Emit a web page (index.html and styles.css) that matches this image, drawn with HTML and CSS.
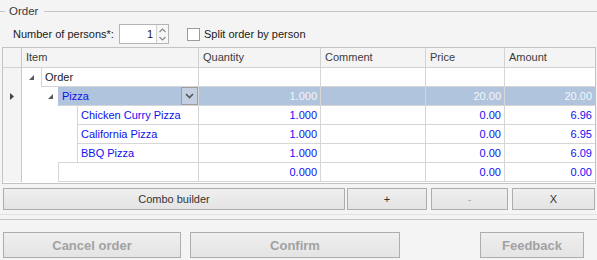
FILE: index.html
```html
<!DOCTYPE html>
<html lang="en">
<head>
  <meta charset="UTF-8" />
  <title>Order</title>
  <link rel="stylesheet" href="styles.css">
</head>
<body>
  <div class="legend"><span class="legend-text">Order</span></div>

  <div class="params">
    <label class="persons-label" for="persons">Number of persons*:</label>
    <div class="spin">
      <input id="persons" class="spin-value" value="1">
      <div class="spin-btns">
        <svg width="7" height="5" viewBox="0 0 7 5"><polyline points="0.5,4 3.5,1 6.5,4" fill="none" stroke="#8a8a8a" stroke-width="1.2"/></svg>
        <svg width="7" height="5" viewBox="0 0 7 5"><polyline points="0.5,1 3.5,4 6.5,1" fill="none" stroke="#8a8a8a" stroke-width="1.2"/></svg>
      </div>
    </div>
    <label class="split"><span class="checkbox"></span>Split order by person</label>
  </div>

  <div class="grid">
    <div class="row head">
      <div class="ind"></div>
      <div class="hcell">Item</div>
      <div class="hcell">Quantity</div>
      <div class="hcell">Comment</div>
      <div class="hcell">Price</div>
      <div class="hcell last">Amount</div>
    </div>

    <div class="row">
      <div class="ind"></div>
      <div class="item">
        <span class="pad lvl0"><svg class="exp" width="5" height="5" viewBox="0 0 5 5"><polygon points="5,0 5,5 0,5" fill="#5a5a5a"/></svg></span>
        <div class="node">Order</div>
      </div>
      <div class="cell"></div>
      <div class="cell"></div>
      <div class="cell"></div>
      <div class="cell last"></div>
    </div>

    <div class="row sel">
      <div class="ind"><svg width="4" height="7" viewBox="0 0 4 7"><polygon points="0,0 4,3.5 0,7" fill="#444"/></svg></div>
      <div class="item">
        <span class="pad lvl1"><svg class="exp" width="5" height="5" viewBox="0 0 5 5"><polygon points="5,0 5,5 0,5" fill="#5a5a5a"/></svg></span>
        <div class="node blue">Pizza
          <span class="drop"><svg width="9" height="6" viewBox="0 0 9 6"><polyline points="1,1 4.5,4.5 8,1" fill="none" stroke="#555" stroke-width="1.6"/></svg></span>
        </div>
      </div>
      <div class="cell">1.000</div>
      <div class="cell"></div>
      <div class="cell">20.00</div>
      <div class="cell last">20.00</div>
    </div>

    <div class="row blue">
      <div class="ind"></div>
      <div class="item"><span class="pad lvl2"></span><div class="node">Chicken Curry Pizza</div></div>
      <div class="cell">1.000</div>
      <div class="cell"></div>
      <div class="cell">0.00</div>
      <div class="cell last">6.96</div>
    </div>

    <div class="row blue">
      <div class="ind"></div>
      <div class="item"><span class="pad lvl2"></span><div class="node">California Pizza</div></div>
      <div class="cell">1.000</div>
      <div class="cell"></div>
      <div class="cell">0.00</div>
      <div class="cell last">6.95</div>
    </div>

    <div class="row blue">
      <div class="ind"></div>
      <div class="item"><span class="pad lvl2"></span><div class="node">BBQ Pizza</div></div>
      <div class="cell">1.000</div>
      <div class="cell"></div>
      <div class="cell">0.00</div>
      <div class="cell last">6.09</div>
    </div>

    <div class="row blue">
      <div class="ind"></div>
      <div class="item"><span class="pad lvl1"></span><div class="node footer"></div></div>
      <div class="cell">0.000</div>
      <div class="cell"></div>
      <div class="cell">0.00</div>
      <div class="cell last">0.00</div>
    </div>
  </div>

  <div class="tools">
    <button class="btn combo">Combo builder</button>
    <button class="btn plus">+</button>
    <button class="btn minus disabled">-</button>
    <button class="btn remove">X</button>
  </div>

  <div class="sep"></div>

  <div class="actions">
    <button class="action cancel">Cancel order</button>
    <button class="action confirm">Confirm</button>
    <button class="action feedback">Feedback</button>
  </div>
</body>
</html>
```

FILE: styles.css
```css
body {
  margin: 0;
  width: 597px;
  height: 260px;
  overflow: hidden;
  background-color: #f4f4f4;
  font-family: "Liberation Sans", Arial, sans-serif;
  font-size: 11px;
  color: #202020;
}

/* group title */
.legend {
  display: flex;
  align-items: center;
  height: 22px;
}

.legend::before,
.legend::after {
  content: "";
  height: 1px;
  background: #c6c6c6;
}

.legend::before {
  width: 5px;
}

.legend::after {
  flex: 1;
}

.legend-text {
  padding: 0 6px 0 4px;
  font-size: 11.5px;
  color: #3a3a3a;
}

/* persons row */
.params {
  display: flex;
  align-items: center;
  height: 20px;
  margin: 2px 0 3px;
  padding-left: 13px;
}

.persons-label {
  width: 106px;
}

.spin {
  display: flex;
  width: 50px;
  height: 20px;
  box-sizing: border-box;
  border: 1px solid #b4b4b4;
  background: #fff;
}

.spin-value {
  width: 33px;
  border: none;
  padding: 0 3px 0 0;
  text-align: right;
  font: inherit;
  color: #202020;
  background: transparent;
}

.spin-btns {
  display: flex;
  flex-direction: column;
  justify-content: center;
  align-items: center;
  gap: 3px;
  width: 15px;
  border-left: 1px solid #d0d0d0;
  background: #f7f7f7;
}

.spin-btns svg {
  display: block;
}

.split {
  display: flex;
  align-items: center;
  gap: 4px;
  margin-left: 18px;
}

.checkbox {
  width: 13px;
  height: 13px;
  box-sizing: border-box;
  border: 1px solid #9c9c9c;
  background: #fff;
}

/* tree grid */
.grid {
  margin-left: 2px;
  width: 594px;
  box-sizing: border-box;
  border: 1px solid #c3c3c3;
  background: #fff;
  padding-bottom: 1px;
}

.row {
  display: grid;
  grid-template-columns: 19px 177px 122px 105px 79px 90px;
  height: 19px;
}

.row.head {
  height: 20px;
}

.ind {
  display: flex;
  align-items: center;
  justify-content: center;
  padding-right: 1px;
  border-right: 1px solid #c8c8c8;
  background: #f4f4f4;
}

.hcell {
  padding-left: 4px;
  line-height: 19px;
  border-right: 1px solid #d2d2d2;
  border-bottom: 1px solid #d2d2d2;
  background: #f4f4f4;
  color: #3c3c3c;
}

.head .ind {
  border-bottom: 1px solid #d2d2d2;
}

.cell {
  padding-right: 3px;
  text-align: right;
  line-height: 18px;
  border-right: 1px solid #d6d6d6;
  border-bottom: 1px solid #d6d6d6;
}

.last {
  border-right: none;
}

.item {
  display: flex;
  border-right: 1px solid #d6d6d6;
}

.pad {
  display: flex;
  align-items: center;
  flex-shrink: 0;
}

.pad.lvl0 {
  width: 19px;
}

.pad.lvl1 {
  width: 36px;
}

.pad.lvl2 {
  width: 55px;
}

.lvl0 .exp {
  margin-left: 7px;
}

.lvl1 .exp {
  margin-left: 26px;
}

.node {
  flex: 1;
  display: flex;
  align-items: center;
  padding-left: 3px;
  border-left: 1px solid #d6d6d6;
  border-bottom: 1px solid #d6d6d6;
}

.node.footer {
  box-shadow: 0 -1px 0 #d6d6d6;
}

.blue {
  color: #1010f0;
}

.sel .node,
.sel .cell {
  background: #b0c4de;
  border-left-color: #b0c4de;
}

.sel .cell {
  color: #f4f6fa;
}

.drop {
  display: flex;
  align-items: center;
  justify-content: center;
  margin-left: auto;
  width: 17px;
  height: 18px;
  box-sizing: border-box;
  border: 1px solid #9e9e9e;
  background: #c3d0e2;
}

/* buttons */
.tools {
  display: flex;
  gap: 4px;
  margin: 4px 0 0 3px;
}

.btn,
.action {
  box-sizing: border-box;
  border: 1px solid #adadad;
  background: linear-gradient(#efefef, #e4e4e4);
  font-family: inherit;
  padding: 0;
}

.btn {
  height: 22px;
  font-size: 11px;
  color: #333;
}

.combo {
  width: 342px;
  margin-right: -2px;
}

.plus {
  width: 80px;
}

.minus {
  width: 77px;
}

.remove {
  width: 83px;
}

.btn.disabled {
  color: #a8a8a8;
}

.sep {
  height: 4px;
  margin-top: 4px;
  border-top: 1px solid #e2e2e2;
  border-bottom: 1px solid #c4c4c4;
}

.actions {
  display: flex;
  margin: 12px 0 0 3px;
}

.action {
  height: 26px;
  font-size: 13px;
  font-weight: bold;
  color: #a2a2a2;
}

.cancel {
  width: 178px;
}

.confirm {
  width: 210px;
  margin-left: 9px;
}

.feedback {
  width: 104px;
  margin-left: 80px;
}
```
